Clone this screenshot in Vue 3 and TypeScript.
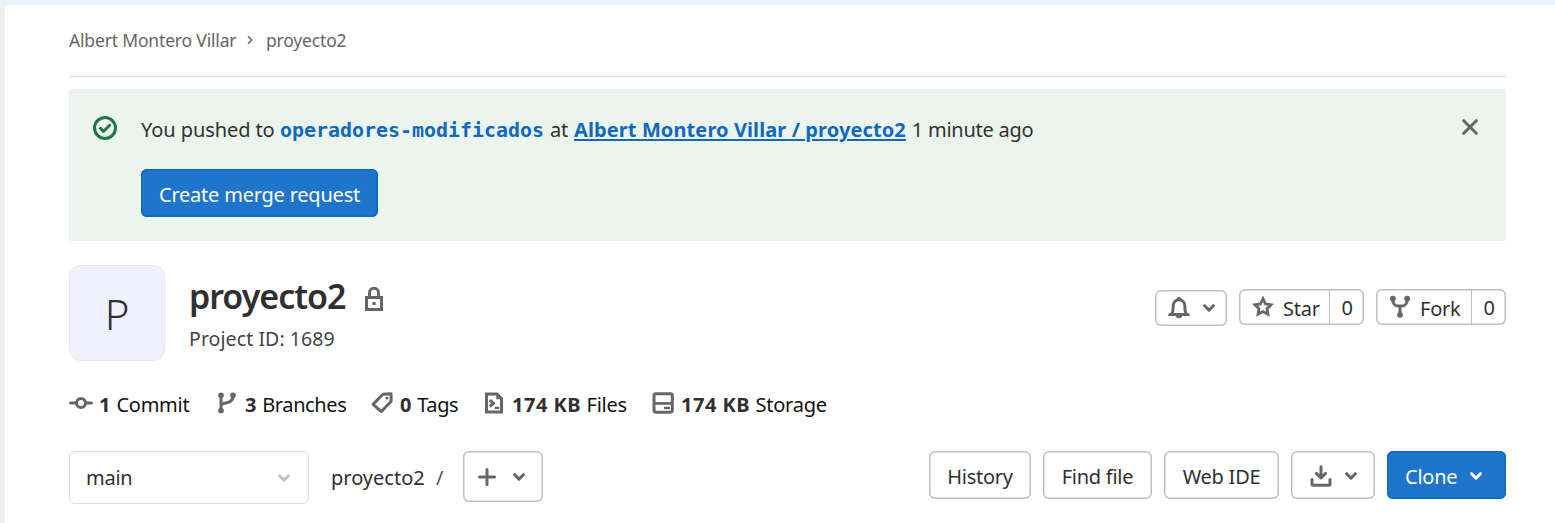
<script setup lang="ts">
interface Stat {
  icon: 'commit' | 'branch' | 'tag' | 'files' | 'storage'
  value: string
  label: string
}

const owner = 'Albert Montero Villar'
const project = 'proyecto2'
const stats: Stat[] = [
  { icon: 'commit', value: '1', label: 'Commit' },
  { icon: 'branch', value: '3', label: 'Branches' },
  { icon: 'tag', value: '0', label: 'Tags' },
  { icon: 'files', value: '174 KB', label: 'Files' },
  { icon: 'storage', value: '174 KB', label: 'Storage' },
]
const treeActions = ['History', 'Find file', 'Web IDE']
</script>

<template>
  <div class="page">
    <main class="content">
      <nav class="breadcrumbs">
        <a class="crumb crumb-owner">{{ owner }}</a>
        <svg class="crumb-sep" viewBox="0 0 8 10"><path d="M2 1.2 5.6 5 2 8.8" /></svg>
        <a class="crumb">{{ project }}</a>
      </nav>

      <section class="alert">
        <svg class="alert-icon" viewBox="0 0 16 16">
          <circle cx="8" cy="8" r="7" />
          <path d="M5 8.2 7.1 10.2 11.1 6.2" />
        </svg>
        <div class="alert-body">
          <p class="alert-text">
            <span class="t-pushed">You pushed to</span>
            <a class="ref">operadores-modificados</a>
            <span class="t-at">at</span>
            <a class="repo">{{ owner }} / {{ project }}</a>
            <span class="t-ago">1 minute ago</span>
          </p>
          <button class="btn primary merge">Create merge request</button>
        </div>
        <svg class="close" viewBox="0 0 16 16"><path d="M1.7 1.7 14.3 14.3M14.3 1.7 1.7 14.3" /></svg>
      </section>

      <header class="project">
        <div class="avatar">P</div>
        <div class="names">
          <div class="title-row">
            <h1>{{ project }}</h1>
            <svg class="lock" viewBox="0 0 18 24">
              <path d="M4.5 10V5.8a4.5 4.5 0 0 1 9 0V10" />
              <path d="M1.5 10.5h15v12h-15z" />
              <path class="solid" d="M7.4 15h3.2v3H7.4z" />
            </svg>
          </div>
          <div class="project-id">Project ID: 1689</div>
        </div>
        <div class="project-actions">
          <button class="btn small bell">
            <svg class="icon" viewBox="0 0 16 16">
              <path d="M2.9 12.3C4 11.2 4.1 9.5 4.1 6.7a3.9 4.2 0 0 1 7.8 0c0 2.8.1 4.5 1.2 5.6z" />
              <path class="solid" d="M6.5 2.2a1.5 1.5 0 0 1 3 0zM1.9 11.4h12.2a1 1 0 0 1 0 2H10a2 1.5 0 0 1-4 0H1.9a1 1 0 0 1 0-2z" />
            </svg>
            <svg class="chevron" viewBox="0 0 12 8"><path d="m1.6 1.7 4.4 4.4 4.4-4.4" /></svg>
          </button>
          <div class="counter star">
            <button class="counter-main">
              <svg class="icon" viewBox="0 0 16 16">
                <path class="outline" d="M8 2.5 9.7 6l3.6.5-2.6 2.6.6 3.7L8 11l-3.300 1.800.6-3.700L2.700 6.500 6.300 6z" />
              </svg>
              <span>Star</span>
            </button>
            <span class="count">0</span>
          </div>
          <div class="counter fork">
            <button class="counter-main">
              <svg class="icon" viewBox="0 0 16 16">
                <path d="M3.3 3v.8A3.6 3.6 0 0 0 6.9 7.4h2.2a3.6 3.6 0 0 0 3.6-3.6V3M8 7.4V13" />
                <circle class="solid" cx="3.2" cy="2.4" r="1.95" />
                <circle class="solid" cx="12.8" cy="2.4" r="1.95" />
                <circle class="solid" cx="8" cy="13.2" r="1.95" />
              </svg>
              <span>Fork</span>
            </button>
            <span class="count">0</span>
          </div>
        </div>
      </header>

      <nav class="stats">
        <a v-for="s in stats" :key="s.icon" class="stat">
          <svg class="icon" viewBox="0 0 16 16">
            <template v-if="s.icon === 'commit'">
              <circle cx="8" cy="8" r="3" />
              <path d="M1 8h4M11 8h4" stroke-linecap="round" />
            </template>
            <template v-else-if="s.icon === 'branch'">
              <path d="M4 3v10M4 10.6C4 8 6 8.3 8.5 7.7 11 7.1 12 5.6 12 3" />
              <circle class="solid" cx="4" cy="2.9" r="1.9" />
              <circle class="solid" cx="12" cy="2.9" r="1.9" />
              <circle class="solid" cx="4" cy="13" r="1.9" />
            </template>
            <template v-else-if="s.icon === 'tag'">
              <path stroke-linejoin="round" d="M8.6 2.2 14 1.8l.1 5L7.6 13.7 2 8.9z" />
              <circle class="solid" cx="11.3" cy="4.6" r="1" />
            </template>
            <template v-else-if="s.icon === 'files'">
              <path d="M3 2h7l3 3v9H3z" />
              <path class="solid" d="M9.5 1.5 13.5 5.5h-4z" />
              <path d="M5.2 6 7.6 8.2 5.2 10.4" />
              <path d="M8.5 11.3h3" stroke-width="1.6" />
            </template>
            <template v-else>
              <rect x="2" y="1.9" width="12.2" height="12.2" rx="1.2" />
              <path d="M2 8.3h12" stroke-width="1.8" />
              <path d="M8.6 11.3h4" stroke-width="1.6" />
            </template>
          </svg>
          <span><b>{{ s.value }}</b> {{ s.label }}</span>
        </a>
      </nav>

      <div class="tree">
        <button class="select">
          <span>main</span>
          <svg class="chevron" viewBox="0 0 12 8"><path d="m1.6 1.7 4.4 4.4 4.4-4.4" /></svg>
        </button>
        <span class="path">{{ project }}</span>
        <span class="slash">/</span>
        <button class="btn add">
          <svg class="plus" viewBox="0 0 18 18"><path d="M1.5 9h15M9 1.5v15" /></svg>
          <svg class="chevron" viewBox="0 0 12 8"><path d="m1.6 1.7 4.4 4.4 4.4-4.4" /></svg>
        </button>
        <div class="tree-actions">
          <button v-for="a in treeActions" :key="a" class="btn action">{{ a }}</button>
          <button class="btn download">
            <svg class="icon" viewBox="0 0 16 16">
              <path d="M8 1.8v7M4.9 6.3 8 9.3l3.100-3" stroke-linecap="round" stroke-linejoin="round" />
              <path d="M2 10.3v3.200a.7.7 0 0 0 .7.7h10.600a.7.7 0 0 0 .7-.7v-3.200" stroke-linecap="round" />
            </svg>
            <svg class="chevron" viewBox="0 0 12 8"><path d="m1.6 1.7 4.4 4.4 4.4-4.4" /></svg>
          </button>
          <button class="btn primary clone">
            <span>Clone</span>
            <svg class="chevron" viewBox="0 0 12 8"><path d="m1.6 1.7 4.4 4.4 4.4-4.4" /></svg>
          </button>
        </div>
      </div>
    </main>
  </div>
</template>

<style>
body {
  background: #fff;
  overflow: hidden;
}
</style>

<style scoped>
.page {
  box-sizing: border-box;
  height: 523px;
  border-left: 5px solid #f0f0f0;
  font-family: "Noto Sans", "Open Sans", sans-serif;
  font-size: 20px;
  line-height: 28px;
  letter-spacing: -0.25px;
  color: #303030;
  white-space: nowrap;
  background: linear-gradient(#e9f3fc 5px, #fff 5px);
}
.content {
  box-sizing: border-box;
  width: 1501px;
  padding: 5px 0 0 64px;
}
button {
  box-sizing: border-box;
  margin: 0;
  padding: 0;
  border: 0;
  background: none;
  color: inherit;
  font: inherit;
  letter-spacing: inherit;
}
svg {
  display: block;
  flex: none;
  fill: none;
  stroke: #666;
  stroke-width: 2;
}
.solid {
  fill: #666;
  stroke: none;
}
.outline {
  stroke-width: 1.9;
}
.icon {
  width: 24px;
  height: 24px;
}
.chevron {
  width: 12px;
  height: 8px;
  stroke-width: 3;
  stroke-linecap: round;
  stroke-linejoin: round;
}
.breadcrumbs {
  box-sizing: border-box;
  display: flex;
  align-items: center;
  height: 72px;
  padding-bottom: 1px;
  border-bottom: 1px solid #dbdbdb;
  font-size: 17.5px;
  letter-spacing: -0.17px;
  color: #666;
}
.crumb-owner {
  width: 177px;
}
.crumb-sep {
  width: 8px;
  height: 10px;
  margin: 0 12px 1px 0;
  stroke: #777;
  stroke-width: 1.7;
}
.alert {
  box-sizing: border-box;
  display: flex;
  height: 152px;
  margin-top: 12px;
  padding: 24px 28px 24px 24px;
  background: #ecf4ee;
}
.alert-icon {
  width: 24px;
  height: 24px;
  margin: 3px 24px 0 0;
  stroke: #217645;
}
.alert-icon path {
  stroke-linecap: round;
  stroke-linejoin: round;
}
.alert-body {
  flex: 1;
}
.alert-text {
  display: flex;
  height: 32px;
  margin: 0 0 24px;
  line-height: 33px;
}
.t-pushed {
  width: 139px;
  letter-spacing: -0.08px;
}
.ref {
  width: 270px;
  font-family: "DejaVu Sans Mono", monospace;
  font-size: 19.95px;
  font-weight: 700;
  line-height: 35px;
  letter-spacing: 0;
  color: #1068bf;
}
.t-at {
  width: 24px;
}
.repo {
  margin-right: 6px;
  font-weight: 700;
  letter-spacing: 0.1px;
  color: #1068bf;
  text-decoration: underline;
  text-decoration-thickness: 2px;
  text-underline-offset: 2px;
}
.close {
  width: 16px;
  height: 16px;
  margin-top: 6px;
  stroke-width: 3;
  stroke-linecap: round;
}
.btn {
  display: flex;
  align-items: center;
  height: 48px;
  border-radius: 6px;
  box-shadow: inset 0 0 0 1.5px #bfbfbf;
}
.primary {
  background: #1f75cb;
  color: #fff;
  box-shadow: inset 0 0 0 1.5px #1068bf;
}
.merge {
  width: 237px;
  padding: 4px 0 0 18px;
  letter-spacing: -0.22px;
}
.project {
  display: flex;
  height: 96px;
  margin-top: 24px;
}
.avatar {
  box-sizing: border-box;
  width: 96px;
  height: 96px;
  margin-right: 24px;
  border: 1px solid #e6e6ec;
  border-radius: 12px;
  background: #f1f0ff;
  font-size: 42px;
  font-weight: 350;
  line-height: 96px;
  text-align: center;
}
.names {
  flex: 1;
}
.title-row {
  display: flex;
  align-items: center;
  height: 60px;
  padding-top: 1px;
}
h1 {
  width: 175px;
  margin: 0;
  font-size: 34px;
  font-weight: 600;
  line-height: 62px;
  letter-spacing: -1px;
}
.lock {
  width: 18px;
  height: 24px;
  margin: 5px 0 0 1px;
  stroke-width: 3;
}
.project-id {
  font-size: 19.5px;
  line-height: 26px;
  letter-spacing: 0.08px;
  color: #444;
}
.project-actions {
  display: flex;
  gap: 12px;
  padding-top: 24px;
}
.small {
  height: 36px;
}
.bell {
  width: 72px;
  margin-top: 1px;
  padding-left: 12px;
  gap: 12px;
}
.counter {
  display: flex;
  box-sizing: border-box;
  height: 36px;
  border-radius: 6px;
  box-shadow: inset 0 0 0 1.5px #bfbfbf;
}
.star {
  width: 125px;
}
.fork {
  width: 130px;
}
.counter-main {
  display: flex;
  align-items: center;
  flex: 1;
  padding-left: 12px;
}
.counter-main .icon {
  margin-right: 8px;
}
.counter-main span {
  padding-top: 3px;
}
.count {
  box-sizing: border-box;
  width: 35px;
  padding-top: 1px;
  border-left: 1.5px solid #bfbfbf;
  line-height: 36px;
  text-align: center;
}
.stats {
  display: grid;
  grid-template-columns: 146px 155px 112px 169px auto;
  grid-template-rows: 24px;
  height: 24px;
  margin-top: 30px;
  color: #111;
}
.stat {
  display: flex;
  align-items: center;
  gap: 6px;
  height: 24px;
}
.stat span {
  padding-top: 3px;
}
.stat b {
  margin-right: 0.5px;
  font-weight: 700;
  letter-spacing: 0.5px;
  color: #303030;
}
.stat:nth-child(2),
.stat:nth-child(3) {
  letter-spacing: -0.4px;
}
.tree {
  display: flex;
  margin-top: 36px;
}
.select {
  display: flex;
  align-items: center;
  justify-content: space-between;
  width: 240px;
  height: 53px;
  padding: 1px 18px 0 16px;
  border: 1px solid #dbdbdb;
  border-radius: 6px;
}
.select .chevron {
  stroke: #bfbfbf;
}
.path {
  width: 105px;
  margin-left: 22px;
  line-height: 53px;
  letter-spacing: 0;
}
.slash {
  width: 27px;
  line-height: 53px;
  color: #555;
}
.add {
  width: 80px;
  height: 51px;
  padding-left: 15px;
  gap: 17px;
}
.plus {
  width: 18px;
  height: 18px;
  stroke-width: 3;
  stroke-linecap: round;
}
.tree-actions {
  display: flex;
  gap: 12px;
  margin-left: auto;
}
.action {
  justify-content: center;
  padding-top: 3px;
}
.action:nth-child(1) {
  width: 102px;
}
.action:nth-child(2) {
  width: 109px;
}
.action:nth-child(3) {
  width: 115px;
}
.download {
  width: 84px;
  padding: 1px 0 0 18px;
  gap: 12px;
}
.clone {
  width: 119px;
  padding: 2px 0 0 18px;
}
.clone span {
  width: 65px;
  padding-top: 1px;
  text-align: left;
}
.clone .chevron {
  stroke: #fff;
}
</style>
